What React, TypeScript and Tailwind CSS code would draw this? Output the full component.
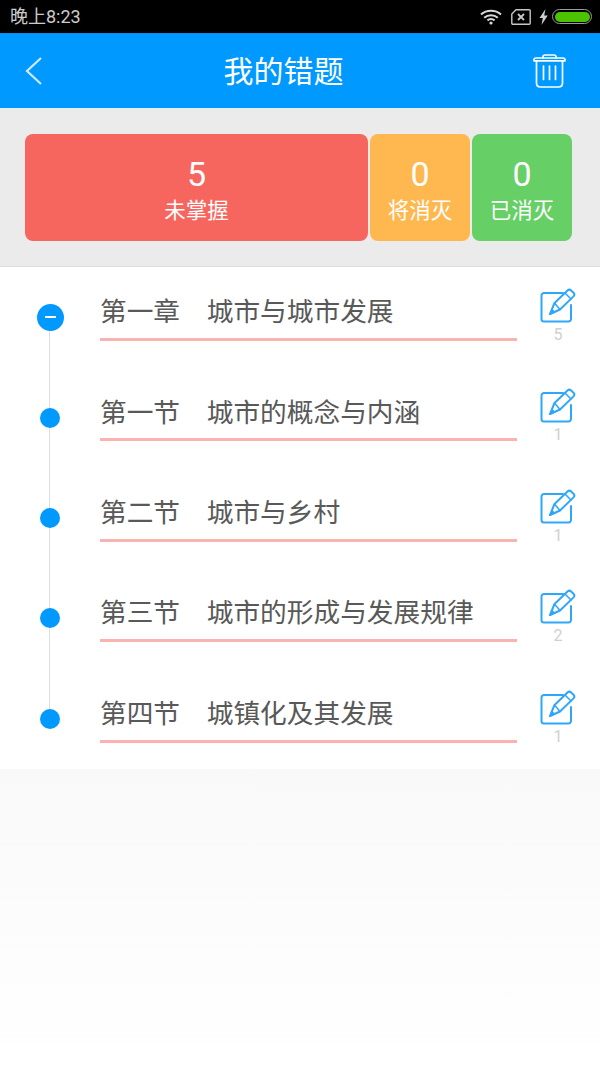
const FONT = "font-['Roboto','Noto_Sans_CJK_SC',sans-serif]";

const rows = [
  { title: "第一章　城市与城市发展", count: 5 },
  { title: "第一节　城市的概念与内涵", count: 1 },
  { title: "第二节　城市与乡村", count: 1 },
  { title: "第三节　城市的形成与发展规律", count: 2 },
  { title: "第四节　城镇化及其发展", count: 1 },
];

function StatusIcons() {
  return (
    <div className="flex items-center">
      {/* wifi */}
      <svg width="22" height="16" viewBox="0 0 22 16" fill="none" stroke="#d8d8d8" strokeWidth="2" className="mr-[9px]">
        <path d="M1 5.500C6.500 0.500 15.500 0.500 21 5.500" />
        <path d="M4.200 8.800C8 5.400 14 5.400 17.800 8.800" />
        <path d="M7.400 11.400C9.400 9.900 12.600 9.900 14.600 11.400" />
        <circle cx="11" cy="14" r="1.600" fill="#d8d8d8" stroke="none" />
      </svg>
      {/* sim */}
      <svg width="20" height="16" viewBox="0 0 20 16" fill="none" stroke="#c8c8c8" className="mr-[8px]">
        <path d="M5 0.800H18.200a1 1 0 0 1 1 1V14.200a1 1 0 0 1-1 1H1.800a1 1 0 0 1-1-1V5z" strokeWidth="1.400" />
        <path d="M7 5L13 11M13 5L7 11" strokeWidth="1.800" />
      </svg>
      {/* charging */}
      <svg width="9" height="16" viewBox="0 0 9 16" fill="#cfcfcf" className="mr-[4px]">
        <path d="M6.500 0L0.500 9H3.800L2.500 16L8.700 6.500H5.200z" />
      </svg>
      <div className="flex h-[15px] w-[40px] items-center rounded-[8px] border border-[#9a9a9a] p-[1.500px]">
        <div className="h-full w-full rounded-[6px] bg-[#4cc300]" />
      </div>
    </div>
  );
}

function EditIcon() {
  return (
    <svg width="36" height="36" viewBox="0 0 36 36" fill="none" stroke="#2ea7fb" strokeLinejoin="round" strokeLinecap="round">
      <path d="M23 5H4a2.500 2.500 0 0 0-2.500 2.500V31a2.500 2.500 0 0 0 2.500 2.500H28.500a2.500 2.500 0 0 0 2.500-2.500V17" strokeWidth="2" />
      <path d="M10 26L14.500 15L27.500 2.500a2.600 2.600 0 0 1 3.600 0L33.500 4.800a2.600 2.600 0 0 1 0 3.600L20 21.500z" strokeWidth="2" />
      <path d="M25 5L31 11M14.500 15L20 21.500" strokeWidth="1.500" />
      <path d="M10 26L12 21.200L14.800 24z" fill="#2ea7fb" strokeWidth="1" />
    </svg>
  );
}

function TrashIcon() {
  return (
    <svg width="33" height="34" viewBox="0 0 33 34" fill="none" stroke="#ffffff" strokeWidth="1.700" strokeLinecap="round" strokeLinejoin="round">
      <path d="M1 6.800V5.800Q1 4 3 4H30Q32 4 32 5.800V6.800z" />
      <path d="M10 4V2.800Q10 1 12 1H21Q23 1 23 2.800V4" />
      <path d="M3.500 7V29Q3.500 33 7.500 33H25.500Q29.500 33 29.500 29V7" />
      <path d="M10.500 12V25.500M16.500 12V25.500M22.500 12V25.500" />
    </svg>
  );
}

function StatCard({ value, label, className }: { value: number; label: string; className: string }) {
  return (
    <div className={`flex h-[107px] flex-col items-center rounded-[8px] pt-[21px] text-white ${className}`}>
      <span className="text-[34px] leading-[38px] font-normal">{value}</span>
      <span className="mt-[3px] text-[21.500px] leading-[30px]">{label}</span>
    </div>
  );
}

export default function App() {
  return (
    <div className={`flex h-[1067px] w-[600px] flex-col overflow-hidden bg-white ${FONT}`}>
      {/* status bar */}
      <div className="flex h-[33px] items-center justify-between bg-black pr-[8px] pl-[10px]">
        <span className="text-[18px] leading-none text-[#cccccc]">晚上8:23</span>
        <StatusIcons />
      </div>

      {/* header */}
      <div className="flex h-[75px] items-center border-t border-[#0090ee] bg-[#0099ff] pr-[34px] pl-[25px]">
        <svg width="18" height="30" viewBox="0 0 18 30" fill="none" stroke="#cfe9ff" strokeWidth="2.200">
          <path d="M16 2L2 15L16 28" />
        </svg>
        <div className="flex-1 pt-px pr-[9px] text-center text-[30px] leading-none text-white">我的错题</div>
        <TrashIcon />
      </div>

      {/* summary */}
      <div className="flex h-[159px] gap-[2px] border-b border-[#dddddd] bg-[#ebebeb] pt-[26px] pl-[25px]">
        <StatCard value={5} label="未掌握" className="w-[343px] bg-[#f7665e]" />
        <StatCard value={0} label="将消灭" className="w-[100px] bg-[#ffb84f]" />
        <StatCard value={0} label="已消灭" className="w-[100px] bg-[#66cf66]" />
      </div>

      {/* chapter list */}
      <div className="flex flex-col">
        {rows.map((row, i) => (
          <div key={row.title} className="flex h-[100.400px]">
            <div className="relative flex w-[100px] items-center justify-center">
              {i < rows.length - 1 && (
                <div className="absolute top-[50px] left-[49px] h-[101px] w-px bg-[#dddddd]" />
              )}
              {i === 0 ? (
                <div className="relative flex h-[27px] w-[27px] items-center justify-center rounded-full bg-[#0099ff]">
                  <div className="h-[2px] w-[11px] bg-white" />
                </div>
              ) : (
                <div className="relative h-[20px] w-[20px] rounded-full bg-[#0099ff]" />
              )}
            </div>
            <div className="h-[74px] w-[417px] border-b-[3px] border-[#fbb3b1]">
              <div className="pt-[27.300px] text-[26.700px] leading-[36px] whitespace-pre text-[#595959]">{row.title}</div>
            </div>
            <div className="ml-[23px] flex flex-col pt-[21px]">
              <EditIcon />
              <span className="mt-[2px] w-[36px] text-center text-[16px] leading-[18px] text-[#d0d0d0]">{row.count}</span>
            </div>
          </div>
        ))}
      </div>

      {/* empty area */}
      <div className="flex-1 bg-gradient-to-b from-[#f9f9f9] to-[#ffffff]" />
    </div>
  );
}
